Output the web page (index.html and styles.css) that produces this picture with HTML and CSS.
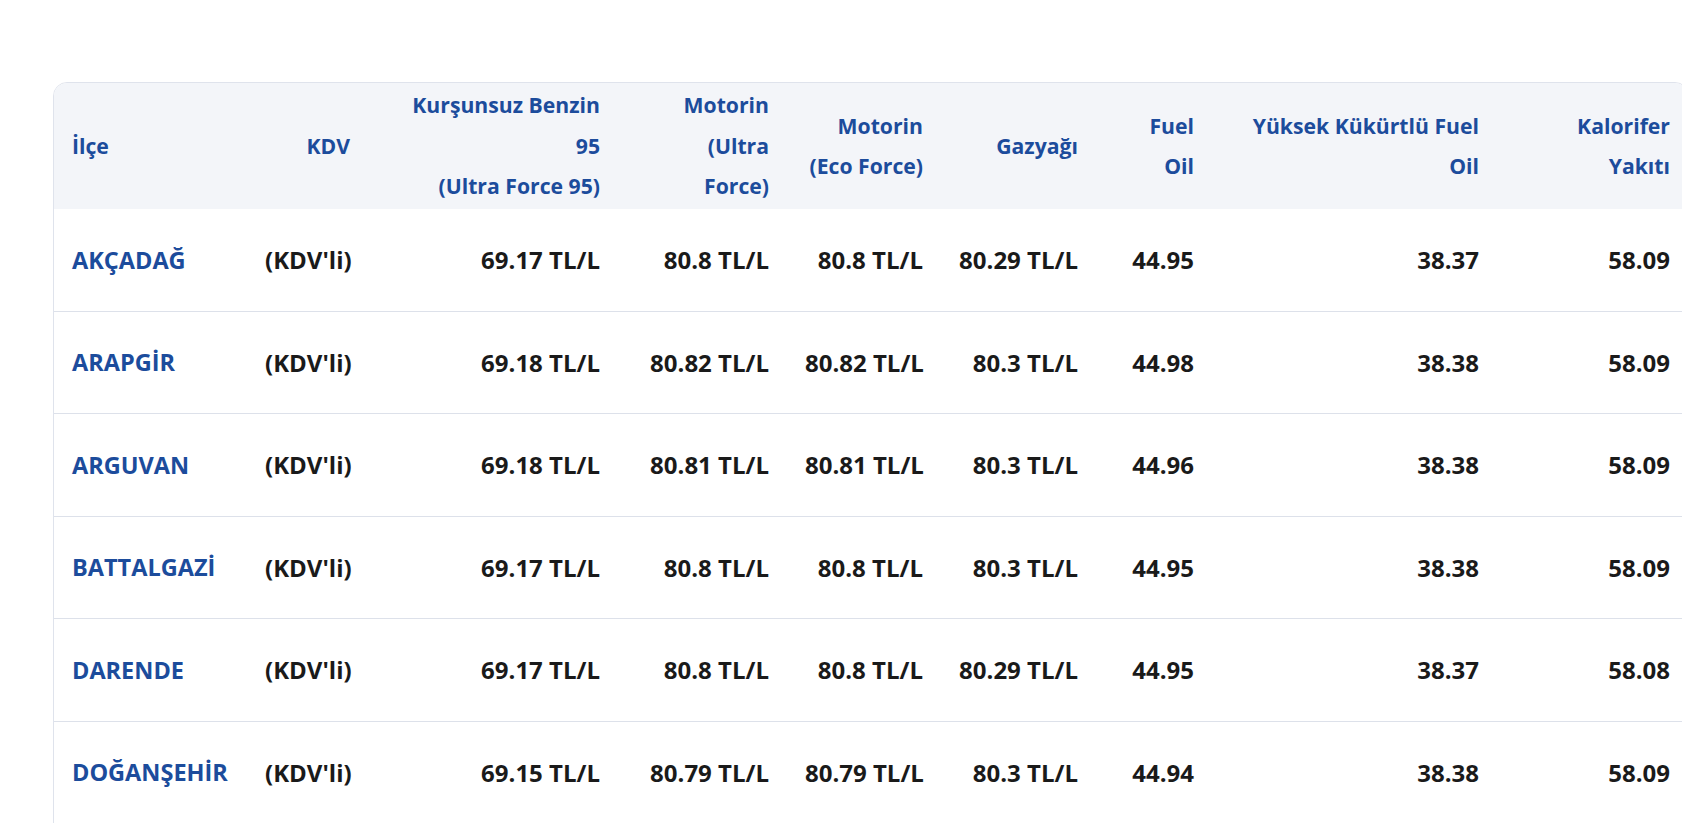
FILE: index.html
```html
<!DOCTYPE html>
<html lang="tr">
<head>
<meta charset="utf-8">
<title>Akaryakıt Fiyatları</title>
<link rel="stylesheet" href="styles.css">
</head>
<body>
<div class="card">
<table class="prices">
<colgroup>
<col class="c-ilce"><col class="c-kdv"><col class="c-benzin"><col class="c-mu"><col class="c-me"><col class="c-gaz"><col class="c-fuel"><col class="c-yk"><col class="c-kal">
</colgroup>
<thead>
<tr>
<th class="left">İlçe</th>
<th>KDV</th>
<th>Kurşunsuz Benzin<br>95<br>(Ultra Force 95)</th>
<th>Motorin<br>(Ultra<br>Force)</th>
<th>Motorin<br>(Eco Force)</th>
<th>Gazyağı</th>
<th>Fuel<br>Oil</th>
<th>Yüksek Kükürtlü Fuel<br>Oil</th>
<th>Kalorifer<br>Yakıtı</th>
</tr>
</thead>
<tbody>
<tr><td class="name">AKÇADAĞ</td><td>(KDV'li)</td><td>69.17 TL/L</td><td>80.8 TL/L</td><td>80.8 TL/L</td><td>80.29 TL/L</td><td>44.95</td><td>38.37</td><td>58.09</td></tr>
<tr><td class="name">ARAPGİR</td><td>(KDV'li)</td><td>69.18 TL/L</td><td>80.82 TL/L</td><td>80.82 TL/L</td><td>80.3 TL/L</td><td>44.98</td><td>38.38</td><td>58.09</td></tr>
<tr><td class="name">ARGUVAN</td><td>(KDV'li)</td><td>69.18 TL/L</td><td>80.81 TL/L</td><td>80.81 TL/L</td><td>80.3 TL/L</td><td>44.96</td><td>38.38</td><td>58.09</td></tr>
<tr><td class="name">BATTALGAZİ</td><td>(KDV'li)</td><td>69.17 TL/L</td><td>80.8 TL/L</td><td>80.8 TL/L</td><td>80.3 TL/L</td><td>44.95</td><td>38.38</td><td>58.09</td></tr>
<tr><td class="name">DARENDE</td><td>(KDV'li)</td><td>69.17 TL/L</td><td>80.8 TL/L</td><td>80.8 TL/L</td><td>80.29 TL/L</td><td>44.95</td><td>38.37</td><td>58.08</td></tr>
<tr><td class="name">DOĞANŞEHİR</td><td>(KDV'li)</td><td>69.15 TL/L</td><td>80.79 TL/L</td><td>80.79 TL/L</td><td>80.3 TL/L</td><td>44.94</td><td>38.38</td><td>58.09</td></tr>
</tbody>
</table>
</div>
</body>
</html>
```

FILE: styles.css
```css
html, body {
  margin: 0;
  background: #ffffff;
  height: 823px;
  overflow: hidden;
}
body {
  padding: 82px 0 0 53px;
  box-sizing: border-box;
  font-family: "Open Sans", "Noto Sans", sans-serif;
}
.card {
  width: 1634px;
  min-height: 780px;
  border: 1px solid #dfe3ec;
  border-radius: 14px;
  overflow: hidden;
  background: #fff;
}
.prices {
  width: 100%;
  border-collapse: collapse;
  table-layout: fixed;
}
.c-ilce { width: 193px; }
.c-kdv { width: 121px; }
.c-benzin { width: 250px; }
.c-mu { width: 169px; }
.c-me { width: 154px; }
.c-gaz { width: 155px; }
.c-fuel { width: 116px; }
.c-yk { width: 285px; }
.c-kal { width: 191px; }

.prices th {
  background: #f3f5f9;
  color: #1c4c9c;
  font-weight: 700;
  font-size: 21.2px;
  line-height: 40.5px;
  height: 126px;
  padding: 0 18px;
  text-align: right;
  vertical-align: middle;
  white-space: nowrap;
}
.prices td {
  height: 101.5px;
  padding: 0 18px;
  text-align: right;
  vertical-align: middle;
  font-size: 24px;
  font-weight: 700;
  color: #1a1a1a;
  border-top: 1px solid #dde1ea;
  white-space: nowrap;
}
.prices tbody tr:first-child td { border-top: none; }
.prices th.left, .prices td.name { text-align: left; }
.prices td.name { color: #1c4c9c; font-size: 23.5px; }
```
